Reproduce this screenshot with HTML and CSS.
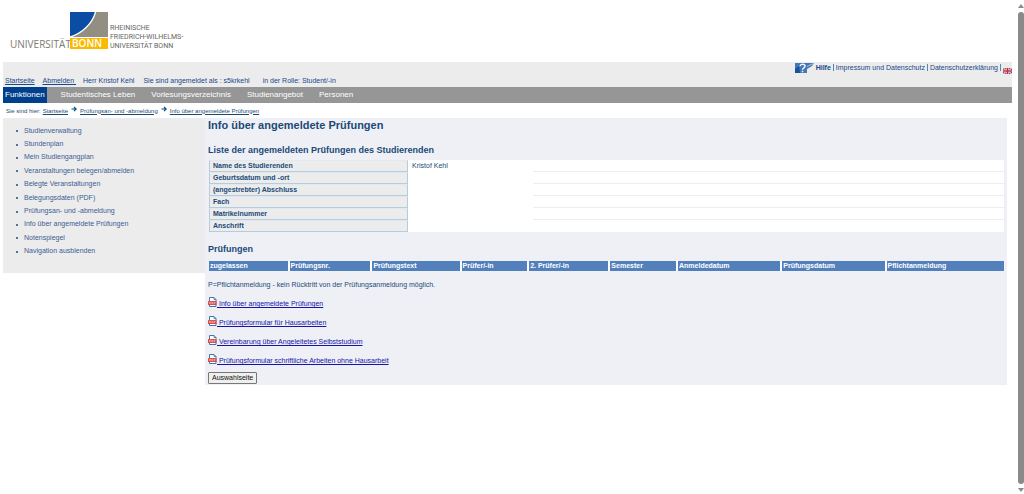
FILE: index.html
```html
<!DOCTYPE html>
<html lang="de">
<head>
<meta charset="utf-8">
<title>Info über angemeldete Prüfungen</title>
<link rel="stylesheet" href="styles.css">
</head>
<body>
<svg width="0" height="0" class="defs" aria-hidden="true">
  <symbol id="pdf" viewBox="0 0 9 10">
    <path d="M1.5.5H6L8 2.5V9.500H1.500Z" fill="#fff" stroke="#3c78a8"/>
    <path d="M6 .5V2.500H8" fill="none" stroke="#3c78a8" stroke-width=".8"/>
    <rect x="0" y="4" width="8.500" height="4" rx=".5" fill="#d8494c"/>
    <path d="M1.500 7V5.200H2.500V6.200H1.500M3.800 5.200V7L5 6.500V5.500ZM6.200 7V5.200H7.500M6.200 6.100H7.200" fill="none" stroke="#fbdcdc" stroke-width=".5"/>
  </symbol>
  <symbol id="arrow" viewBox="0 0 6 6">
    <path d="M.5 3H5M3 .8L5.200 3L3 5.200" fill="none" stroke="#004a80" stroke-width="1.100"/>
  </symbol>
</svg>
<div class="page">
  <header class="brand">
    <span class="uni">UNIVERSITÄT</span>
    <span class="mark">
      <svg class="emblem" viewBox="0 0 38 25" aria-hidden="true">
        <rect width="38" height="25" fill="#928e82"/>
        <path d="M0 0H25.500C22.500 11.500 12 21.500 0 25Z" fill="#0b4da2"/>
        <path d="M25.500 0C22.500 11.500 12 21.500 0 25" fill="none" stroke="#fff" stroke-width="1.300"/>
      </svg>
      <span class="bonn">BONN</span>
    </span>
    <span class="full">RHEINISCHE<br>FRIEDRICH-WILHELMS-<br>UNIVERSITÄT BONN</span>
  </header>
  <div class="meta">
    <div class="session">
      <a href="#">Startseite</a><a class="logout" href="#">Abmelden&nbsp;</a><span class="user">Herr Kristof Kehl</span><span class="login">Sie sind angemeldet als : s5krkehl</span><span>in der Rolle: Student/-in</span>
    </div>
    <div class="service">
      <svg class="help" viewBox="0 0 19 10" aria-hidden="true">
        <path d="M0 0H19L17 3L12 6V10H0Z" fill="#4378b5"/>
        <path d="M0 6L4 3L5 10H0Z" fill="#17519a"/>
        <path d="M5 3.200C5.500.5 10.500.8 10 3.400C9.800 5 7.600 4.700 7.500 6.700M7.500 7.800V9.200" fill="none" stroke="#eef4fb" stroke-width="1.500"/>
        <path d="M12 3.500L18 .7" stroke="#a9c5e2" stroke-width="1"/>
      </svg>
      <a class="strong" href="#">Hilfe</a><i></i><a href="#">Impressum und Datenschutz</a><i></i><a href="#">Datenschutzerklärung</a><i></i>
      <a class="flag" href="#" aria-label="English"><svg viewBox="0 0 9 6" aria-hidden="true">
        <rect width="9" height="6" fill="#3d4f91"/>
        <path d="M0 0L9 6M9 0L0 6" stroke="#fff" stroke-width="1.200"/>
        <path d="M0 0L9 6M9 0L0 6" stroke="#d33" stroke-width=".5"/>
        <path d="M4.500 0V6M0 3H9" stroke="#fff" stroke-width="2.200"/>
        <path d="M4.500 0V6M0 3H9" stroke="#d8232f" stroke-width="1.300"/>
      </svg></a>
    </div>
  </div>
  <nav class="tabs">
    <a class="active" href="#">Funktionen</a><a href="#">Studentisches Leben</a><a href="#">Vorlesungsverzeichnis</a><a href="#">Studienangebot</a><a href="#">Personen</a>
  </nav>
  <div class="crumbs">
    <span>Sie sind hier:</span><a href="#">Startseite</a><svg><use href="#arrow"/></svg><a href="#">Prüfungsan- und -abmeldung</a><svg><use href="#arrow"/></svg><a href="#">Info über angemeldete Prüfungen</a>
  </div>
  <div class="columns">
    <nav class="side">
      <ul>
        <li><a href="#">Studienverwaltung</a></li>
        <li><a href="#">Stundenplan</a></li>
        <li><a href="#">Mein Studiengangplan</a></li>
        <li><a href="#">Veranstaltungen belegen/abmelden</a></li>
        <li><a href="#">Belegte Veranstaltungen</a></li>
        <li><a href="#">Belegungsdaten (PDF)</a></li>
        <li><a href="#">Prüfungsan- und -abmeldung</a></li>
        <li><a href="#">Info über angemeldete Prüfungen</a></li>
        <li><a href="#">Notenspiegel</a></li>
        <li><a href="#">Navigation ausblenden</a></li>
      </ul>
    </nav>
    <main class="content">
      <h1>Info über angemeldete Prüfungen</h1>
      <h2>Liste der angemeldeten Prüfungen des Studierenden</h2>
      <table class="person">
        <tr><th scope="row">Name des Studierenden</th><td>Kristof Kehl</td><td class="line"></td></tr>
        <tr><th scope="row">Geburtsdatum und -ort</th><td></td><td class="line"></td></tr>
        <tr><th scope="row">(angestrebter) Abschluss</th><td></td><td class="line"></td></tr>
        <tr><th scope="row">Fach</th><td></td><td class="line"></td></tr>
        <tr><th scope="row">Matrikelnummer</th><td></td><td class="line"></td></tr>
        <tr><th scope="row">Anschrift</th><td></td><td></td></tr>
      </table>
      <h2 class="second">Prüfungen</h2>
      <table class="exams">
        <colgroup><col class="w-a"><col class="w-b"><col class="w-c"><col class="w-d"><col class="w-e"><col class="w-d"><col class="w-f"><col class="w-f"><col></colgroup>
        <tr><th>zugelassen</th><th>Prüfungsnr.</th><th>Prüfungstext</th><th>Prüfer/-in</th><th>2. Prüfer/-in</th><th>Semester</th><th>Anmeldedatum</th><th>Prüfungsdatum</th><th>Pflichtanmeldung</th></tr>
      </table>
      <p>P=Pflichtanmeldung - kein Rücktritt von der Prüfungsanmeldung möglich.</p>
      <ul class="files">
        <li><a href="#"><svg><use href="#pdf"/></svg>&nbsp;Info über angemeldete Prüfungen</a></li>
        <li><a href="#"><svg><use href="#pdf"/></svg>&nbsp;Prüfungsformular für Hausarbeiten</a></li>
        <li><a href="#"><svg><use href="#pdf"/></svg>&nbsp;Vereinbarung über Angeleitetes Selbststudium</a></li>
        <li><a href="#"><svg><use href="#pdf"/></svg>&nbsp;Prüfungsformular schriftliche Arbeiten ohne Hausarbeit</a></li>
      </ul>
      <button type="button">Auswahlseite</button>
    </main>
  </div>
</div>
<div class="scroll" aria-hidden="true">
  <svg viewBox="0 0 6 4"><path d="M3 0L6 4H0Z"/></svg>
  <span></span>
  <svg viewBox="0 0 6 4"><path d="M3 4L6 0H0Z"/></svg>
</div>
</body>
</html>
```

FILE: styles.css
```css
* { box-sizing: border-box; }
body {
  margin: 0;
  background: #fff;
  color: #1a4a76;
  font: 7px/10px "Liberation Sans", Arial, sans-serif;
}
a { color: inherit; }
ul { list-style: none; margin: 0; padding: 0; }
.defs { position: absolute; }
.page { padding: 0 12px 0 3px; }

.brand { display: flex; align-items: flex-start; height: 62px; padding: 12px 0 0 7px; }
.uni { color: #7d7a72; font: 10px/12px "Open Sans", sans-serif; width: 60px; padding-top: 26px; }
.mark { display: flex; flex-direction: column; width: 38px; }
.emblem { width: 38px; height: 25px; margin-bottom: 1px; }
.bonn { background: #fbb900; color: #fff; font: 600 10px/11px "Open Sans", sans-serif; padding-left: 2px; }
.full { color: #66645f; font: 7px/9px Roboto, sans-serif; padding: 12px 0 0 2px; }

.meta { display: flex; justify-content: space-between; height: 25px; background: #ececec; color: #16488a; }
.session { display: flex; align-self: flex-end; padding-left: 2px; line-height: 12px; }
.logout { margin-left: 8px; }
.user { margin-left: 7px; }
.login { margin: 0 13px 0 9px; }
.service { display: flex; align-self: flex-start; align-items: center; line-height: 12px; }
.service a { text-decoration: none; }
.service i { width: 1px; height: 7px; margin: 0 2px 2px; background: #5c84b4; }
.strong { font-weight: bold; }
.help { width: 19px; height: 10px; margin-right: 2px; }
.flag { display: flex; align-self: flex-end; }
.flag svg { width: 9px; height: 6px; }

.tabs { display: flex; background: #969696; font-size: 8px; line-height: 16px; }
.tabs a { color: #fff; text-decoration: none; margin-right: 12px; padding: 0 2px; }
.tabs .active { background: #003f8c; }

.crumbs { display: flex; align-items: center; height: 15px; padding-left: 3px; font-size: 6px; }
.crumbs svg { width: 6px; height: 6px; margin: 0 3px 4px; }
.crumbs span { margin-right: 2px; }

.columns { display: flex; align-items: flex-start; padding-right: 5px; }
.side { flex: 0 0 202px; background: #ececec; padding: 6px 0 15px 21px; color: #3d5c94; }
.side ul { display: grid; height: 134px; grid-auto-rows: 1fr; align-items: center; }
.side li { display: flex; align-items: center; }
.side li::before { content: ""; width: 2px; height: 2px; margin: 1px 6px 0 -8px; border-radius: 1px; background: #1f4e79; }
.side a { text-decoration: none; }

.content { flex: 1; min-width: 0; background: #eff0f6; padding: 0 3px 1px; }
h1 { margin: 0 0 13px; font-size: 11px; line-height: 14px; }
h2 { margin: 0 0 5px; font-size: 9px; line-height: 10px; }
h2.second { margin: 12px 0 7px; }

.person { width: 100%; border-spacing: 0; table-layout: fixed; background: #fff; border-left: 1px solid #eff0f6; }
.person th { width: 199px; height: 12px; padding: 0 3px; background: #ececec; border: 1px solid #b3cde0; border-top-color: #e2e8ee; text-align: left; line-height: 10px; }
.person td { padding: 0 4px; }
.person td:nth-child(2) { width: 125px; }
.person .line { border-bottom: 1px solid #eee; }

.exams { width: 100%; border-spacing: 0; table-layout: fixed; }
.exams th { padding: 0 1px; height: 10px; background: #5280bd; background-clip: padding-box; color: #fff; text-align: left; border-left: 2px solid #fff; }
.exams th:first-child { border-left: 1px solid #eff0f6; }
.w-a { width: 10%; }
.w-b { width: 10.400%; }
.w-c { width: 11.200%; }
.w-d { width: 8.500%; }
.w-e { width: 10.200%; }
.w-f { width: 13.100%; }

p { margin: 9px 0 7px; }
.files { display: grid; gap: 9px; color: #1414a8; }
.files svg { width: 9px; height: 10px; vertical-align: -1px; }
.files li { height: 10px; }
button {
  display: block;
  margin-top: 8px;
  padding: 0 3px;
  border: 1px solid #777;
  border-radius: 1px;
  background: #efefef;
  color: #111;
  font: 7px/10px "Liberation Sans", Arial, sans-serif;
}

.scroll { position: fixed; top: 4px; right: 0; bottom: 2px; width: 6px; display: flex; flex-direction: column; gap: 4px; }
.scroll svg { width: 6px; height: 4px; fill: #8a8a8a; }
.scroll span { flex: 1; border-radius: 3px; background: #8a8a8a; }
```
